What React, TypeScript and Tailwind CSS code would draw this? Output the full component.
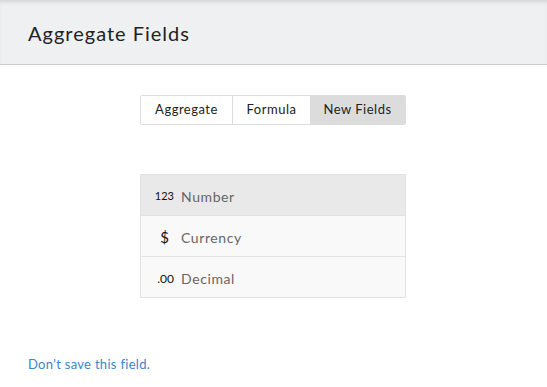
import React from "react";

export default function App() {
  const font = { fontFamily: '"Lato", "Open Sans", sans-serif' };
  return (
    <div className="w-[547px] h-[387px] bg-white overflow-hidden" style={font}>
      <div className="h-[65px] bg-[#eff0f2] border-b border-[#cfcfd1] flex items-center pl-[28px] shadow-[inset_0_4px_4px_-2px_rgba(0,0,0,0.12)]">
        <h1 className="text-[20px] text-[#222] tracking-[1px] mt-[1px]">Aggregate Fields</h1>
      </div>
      <div className="flex pl-[140px] pt-[30px]">
        <div className="flex h-[30px] border border-[#dcdcdc] rounded-[2px] text-[13px] text-[#222] tracking-[0.5px] overflow-hidden">
          <div className="w-[92px] flex items-center justify-center border-r border-[#dcdcdc]">Aggregate</div>
          <div className="w-[77px] flex items-center justify-center">Formula</div>
          <div className="w-[95px] flex items-center justify-center bg-[#dcdcdc]">New Fields</div>
        </div>
      </div>
      <div className="flex pl-[140px] mt-[49px]">
        <div className="w-[266px] border border-[#e2e2e2] text-[14px] text-[#666] tracking-[0.6px]">
          <div className="h-[41px] flex items-center bg-[#e9e9e9] border-b border-[#e2e2e2] pt-[3px]">
            <span className="w-[40px] text-right pr-[7px] text-[11px] text-[#111] tracking-normal">123</span>
            <span>Number</span>
          </div>
          <div className="h-[41px] flex items-center bg-[#f9f9f9] border-b border-[#e2e2e2] pt-[3px]">
            <span className="w-[40px] text-right pr-[12px] text-[15px] text-[#111] tracking-normal">$</span>
            <span>Currency</span>
          </div>
          <div className="h-[40px] flex items-center bg-[#f9f9f9] pt-[3px]">
            <span className="w-[40px] text-right pr-[7px] text-[12px] text-[#111] tracking-normal">.00</span>
            <span>Decimal</span>
          </div>
        </div>
      </div>
      <div className="pl-[28px] mt-[57px] text-[13px] text-[#3b85c9] tracking-[0.3px]">Don't save this field.</div>
    </div>
  );
}
